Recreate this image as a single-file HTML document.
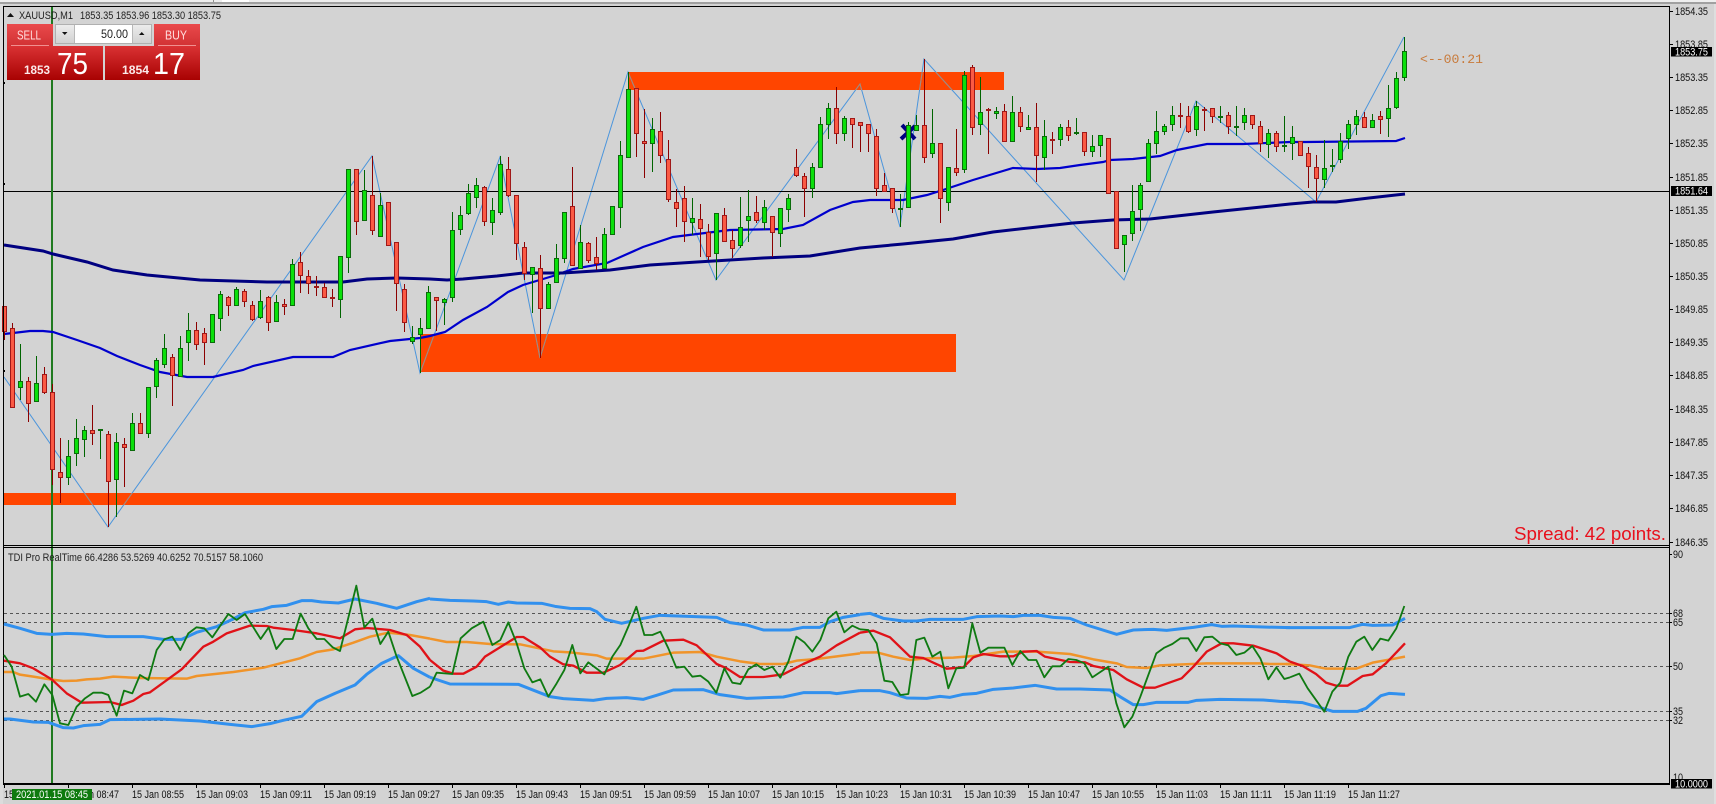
<!DOCTYPE html>
<html><head><meta charset="utf-8"><title>XAUUSD,M1</title>
<style>
html,body{margin:0;padding:0;background:#d3d3d3;width:1716px;height:804px;overflow:hidden}
svg{display:block}
text{font-family:"Liberation Sans",Arial,sans-serif}
</style></head><body>
<svg xmlns="http://www.w3.org/2000/svg" width="1716" height="804" viewBox="0 0 1716 804">
<defs>
<linearGradient id="g1" x1="0" y1="0" x2="0" y2="1"><stop offset="0" stop-color="#ea4a4c"/><stop offset="1" stop-color="#d03032"/></linearGradient>
<linearGradient id="g2" x1="0" y1="0" x2="0" y2="1"><stop offset="0" stop-color="#da3234"/><stop offset="1" stop-color="#a80202"/></linearGradient>
<linearGradient id="g3" x1="0" y1="0" x2="0" y2="1"><stop offset="0" stop-color="#ececec"/><stop offset="1" stop-color="#d2d2d2"/></linearGradient>
<clipPath id="orangeclip"><rect x="628" y="72" width="376" height="18"/><rect x="421" y="334" width="535" height="38"/><rect x="4" y="493" width="952" height="12"/></clipPath>
</defs>
<rect width="1716" height="804" fill="#d3d3d3"/>
<!-- window edges -->
<rect x="0" y="0" width="1716" height="2" fill="#eeeeee"/>
<rect x="213" y="0" width="1" height="2" fill="#909090"/>
<rect x="222" y="0" width="27" height="2" fill="#ffffff"/>
<rect x="0" y="2" width="1716" height="2" fill="#a0a0a0"/>
<rect x="0" y="4" width="3" height="800" fill="#dcdcdc"/>
<rect x="1714" y="4" width="2" height="800" fill="#dedede"/>
<!-- orange rectangles -->
<rect x="628" y="72" width="376" height="18" fill="#ff4500"/>
<rect x="421" y="334" width="535" height="38" fill="#ff4500"/>
<rect x="4" y="493" width="952" height="12" fill="#ff4500"/>
<!-- zigzag -->
<polyline fill="none" stroke="#4b95dc" stroke-width="1" points="4,377 108,527 372,156 420,373 500,157 540,358 628,72 716,280 860,84 900,227 924,59 1124,280 1196,101 1316,202 1404,37"/>
<polyline clip-path="url(#orangeclip)" fill="none" stroke="#a88a78" stroke-width="1" points="4,377 108,527 372,156 420,373 500,157 540,358 628,72 716,280 860,84 900,227 924,59 1124,280 1196,101 1316,202 1404,37"/>
<!-- horizontal price line -->
<rect x="3" y="191" width="1666" height="1" fill="#000"/>
<!-- vertical green line -->
<rect x="51" y="7" width="2" height="777" fill="#1f7a1f"/>
<!-- moving averages -->
<polyline fill="none" stroke="#0000cd" stroke-width="2.2" points="4,334 13,333 30,331 43,331 53,332 77,340 100,348 117,356 140,365 160,372 187,377 213,377 243,370 253,366 293,357 333,357 350,350 390,341 420,338 430,336 445,332 463,320 487,307 508,292 523,285 553,276 573,269 607,263 643,247 673,237 697,234 730,230 783,229 803,225 830,210 853,202 870,200 903,200 927,195 943,190 973,180 1013,168 1037,169 1060,168 1080,165 1103,162 1110,160 1133,159 1160,156 1177,150 1207,144 1243,144 1290,142 1306,142 1396,141 1405,138"/>
<polyline fill="none" stroke="#000080" stroke-width="3" points="4,245 43,251 53,254 87,262 113,270 147,275 200,280 267,282 343,282 367,279 397,278 430,279 447,280 463,279 497,276 523,273 563,273 610,270 650,265 697,262 763,258 810,256 860,248 903,244 953,239 993,232 1073,223 1113,220 1150,219 1213,212 1290,204 1313,202 1336,202 1369,198 1405,194"/>
<!-- x marker -->
<path d="M902 125L915 139M915 126L901 139" stroke="#000080" stroke-width="4" fill="none"/>
<!-- candles -->
<g shape-rendering="crispEdges">
<path fill="none" stroke="#006400" stroke-width="1" d="M20.5 344V400M36.5 356V401M68.5 440V485M76.5 419V466M84.5 426V457M100.5 429V459M116.5 433V517M132.5 413V451M148.5 387V438M156.5 358V398M164.5 334V368M180.5 336V376M188.5 313V361M212.5 314V342M220.5 291V331M236.5 287V305M260.5 290V319M276.5 295V321M292.5 259V305M340.5 256V318M348.5 169V273M364.5 170V220M380.5 193V236M412.5 326V344M420.5 318V373M428.5 286V328M444.5 298V325M452.5 212V302M460.5 206V235M468.5 184V215M476.5 178V208M492.5 198V235M500.5 156V215M532.5 267V313M548.5 282V308M556.5 244V282M564.5 212V263M580.5 225V268M604.5 228V268M612.5 206V234M620.5 141V228M628.5 72V157M652.5 118V172M692.5 198V235M716.5 213V280M740.5 197V248M748.5 190V242M764.5 200V230M780.5 208V247M788.5 194V222M812.5 163V198M820.5 117V167M828.5 103V139M844.5 116V141M900.5 194V227M908.5 122V208M916.5 115V130M932.5 109V158M948.5 167V211M964.5 71V173M980.5 77V135M996.5 107V119M1012.5 96V141M1028.5 115V129M1044.5 120V170M1060.5 124V146M1076.5 118V135M1092.5 135V157M1100.5 135V157M1124.5 235V272M1132.5 185V241M1140.5 183V231M1148.5 139V181M1156.5 111V154M1164.5 124V135M1172.5 106V131M1196.5 101V136M1220.5 106V123M1236.5 106V136M1244.5 108V130M1268.5 129V158M1284.5 116V152M1292.5 126V160M1324.5 140V188M1332.5 149V172M1340.5 133V163M1348.5 120V149M1356.5 110V135M1372.5 114V127M1388.5 85V137M1396.5 72V109M1404.5 37V81"/>
<path fill="none" stroke="#8b0000" stroke-width="1" d="M4.5 306V340M12.5 323V407M28.5 377V422M44.5 367V394M52.5 384V485M60.5 438V503M92.5 405V445M108.5 431V527M124.5 438V487M140.5 413V433M172.5 354V406M196.5 322V350M204.5 328V365M228.5 296V316M244.5 289V307M252.5 301V321M268.5 296V331M284.5 299V315M300.5 252V293M308.5 270V294M316.5 276V296M324.5 283V297M332.5 289V307M356.5 169V235M372.5 156V235M388.5 202V245M396.5 242V311M404.5 284V332M436.5 297V331M484.5 186V226M508.5 157V197M516.5 195V260M524.5 242V280M540.5 255V358M572.5 167V265M588.5 242V263M596.5 237V270M636.5 88V157M644.5 109V178M660.5 112V163M668.5 140V202M676.5 189V227M684.5 186V242M700.5 204V257M708.5 224V260M724.5 208V241M732.5 230V258M756.5 196V223M772.5 216V257M796.5 149V177M804.5 173V217M836.5 87V144M852.5 118V148M860.5 122V152M868.5 124V152M876.5 129V196M884.5 173V191M892.5 188V213M924.5 59V163M940.5 143V223M956.5 129V176M972.5 65V135M988.5 108V154M1004.5 104V141M1020.5 107V132M1036.5 103V182M1052.5 132V154M1068.5 120V141M1084.5 132V156M1108.5 138V193M1116.5 191V249M1180.5 103V128M1188.5 106V133M1204.5 107V131M1212.5 108V123M1228.5 112V134M1252.5 115V129M1260.5 121V152M1276.5 131V152M1300.5 141V155M1308.5 147V188M1316.5 155V202M1364.5 112V127M1380.5 111V134"/>
<path fill="#0be00b" stroke="#0b6b0b" stroke-width="1" d="M18.5 381.5h4v6h-4zM34.5 383.5h4v18h-4zM66.5 456.5h4v21h-4zM74.5 438.5h4v15h-4zM82.5 430.5h4v9h-4zM98.5 429.5h4v1h-4zM114.5 442.5h4v37h-4zM130.5 423.5h4v27h-4zM146.5 387.5h4v46h-4zM154.5 360.5h4v26h-4zM162.5 348.5h4v16h-4zM178.5 348.5h4v28h-4zM186.5 330.5h4v12h-4zM210.5 314.5h4v28h-4zM218.5 294.5h4v24h-4zM234.5 289.5h4v16h-4zM258.5 301.5h4v16h-4zM274.5 302.5h4v19h-4zM290.5 264.5h4v41h-4zM338.5 256.5h4v43h-4zM346.5 169.5h4v88h-4zM362.5 190.5h4v30h-4zM378.5 205.5h4v31h-4zM410.5 337.5h4v4h-4zM418.5 328.5h4v6h-4zM426.5 292.5h4v36h-4zM442.5 299.5h4v3h-4zM450.5 230.5h4v67h-4zM458.5 215.5h4v14h-4zM466.5 193.5h4v20h-4zM474.5 185.5h4v12h-4zM490.5 210.5h4v12h-4zM498.5 164.5h4v48h-4zM530.5 267.5h4v7h-4zM546.5 284.5h4v24h-4zM554.5 258.5h4v24h-4zM562.5 212.5h4v46h-4zM578.5 242.5h4v26h-4zM602.5 234.5h4v34h-4zM610.5 206.5h4v28h-4zM618.5 155.5h4v52h-4zM626.5 89.5h4v68h-4zM650.5 129.5h4v14h-4zM690.5 218.5h4v4h-4zM714.5 213.5h4v40h-4zM738.5 227.5h4v18h-4zM746.5 216.5h4v4h-4zM762.5 207.5h4v15h-4zM778.5 208.5h4v25h-4zM786.5 198.5h4v11h-4zM810.5 167.5h4v21h-4zM818.5 124.5h4v43h-4zM826.5 108.5h4v16h-4zM842.5 118.5h4v15h-4zM898.5 208.5h4v1h-4zM906.5 125.5h4v82h-4zM914.5 125.5h4v5h-4zM930.5 143.5h4v10h-4zM946.5 167.5h4v35h-4zM962.5 75.5h4v94h-4zM978.5 112.5h4v12h-4zM994.5 111.5h4v2h-4zM1010.5 112.5h4v29h-4zM1026.5 127.5h4v2h-4zM1042.5 136.5h4v21h-4zM1058.5 127.5h4v12h-4zM1074.5 132.5h4v1h-4zM1090.5 146.5h4v5h-4zM1098.5 135.5h4v10h-4zM1122.5 235.5h4v9h-4zM1130.5 211.5h4v22h-4zM1138.5 185.5h4v24h-4zM1146.5 143.5h4v38h-4zM1154.5 131.5h4v12h-4zM1162.5 126.5h4v5h-4zM1170.5 115.5h4v9h-4zM1194.5 106.5h4v23h-4zM1218.5 116.5h4v1h-4zM1234.5 126.5h4v1h-4zM1242.5 115.5h4v7h-4zM1266.5 133.5h4v11h-4zM1282.5 145.5h4v1h-4zM1290.5 137.5h4v6h-4zM1322.5 168.5h4v11h-4zM1330.5 165.5h4v1h-4zM1338.5 141.5h4v18h-4zM1346.5 124.5h4v14h-4zM1354.5 116.5h4v8h-4zM1370.5 120.5h4v7h-4zM1386.5 108.5h4v10h-4zM1394.5 78.5h4v29h-4zM1402.5 51.5h4v26h-4z"/>
<path fill="#fb5a44" stroke="#a01818" stroke-width="1" d="M2.5 306.5h4v25h-4zM10.5 328.5h4v79h-4zM26.5 381.5h4v22h-4zM42.5 374.5h4v18h-4zM50.5 392.5h4v77h-4zM58.5 472.5h4v5h-4zM90.5 430.5h4v3h-4zM106.5 434.5h4v47h-4zM122.5 444.5h4v3h-4zM138.5 423.5h4v10h-4zM170.5 357.5h4v18h-4zM194.5 330.5h4v14h-4zM202.5 333.5h4v9h-4zM226.5 297.5h4v8h-4zM242.5 291.5h4v10h-4zM250.5 305.5h4v14h-4zM266.5 297.5h4v25h-4zM282.5 304.5h4v2h-4zM298.5 262.5h4v13h-4zM306.5 276.5h4v7h-4zM314.5 286.5h4v1h-4zM322.5 287.5h4v10h-4zM330.5 297.5h4v1h-4zM354.5 169.5h4v52h-4zM370.5 195.5h4v35h-4zM386.5 202.5h4v43h-4zM394.5 242.5h4v41h-4zM402.5 289.5h4v33h-4zM434.5 297.5h4v3h-4zM482.5 187.5h4v34h-4zM506.5 169.5h4v26h-4zM514.5 195.5h4v48h-4zM522.5 247.5h4v26h-4zM538.5 268.5h4v40h-4zM570.5 206.5h4v59h-4zM586.5 243.5h4v17h-4zM594.5 257.5h4v6h-4zM634.5 88.5h4v45h-4zM642.5 141.5h4v2h-4zM658.5 131.5h4v24h-4zM666.5 159.5h4v40h-4zM674.5 202.5h4v6h-4zM682.5 198.5h4v23h-4zM698.5 219.5h4v9h-4zM706.5 232.5h4v24h-4zM722.5 215.5h4v26h-4zM730.5 240.5h4v8h-4zM754.5 212.5h4v8h-4zM770.5 216.5h4v16h-4zM794.5 167.5h4v8h-4zM802.5 176.5h4v12h-4zM834.5 108.5h4v25h-4zM850.5 118.5h4v6h-4zM858.5 122.5h4v3h-4zM866.5 124.5h4v9h-4zM874.5 136.5h4v52h-4zM882.5 185.5h4v6h-4zM890.5 188.5h4v20h-4zM922.5 125.5h4v32h-4zM938.5 143.5h4v55h-4zM954.5 168.5h4v4h-4zM970.5 67.5h4v60h-4zM986.5 109.5h4v1h-4zM1002.5 111.5h4v30h-4zM1018.5 112.5h4v14h-4zM1034.5 127.5h4v28h-4zM1050.5 139.5h4v1h-4zM1066.5 127.5h4v8h-4zM1082.5 132.5h4v19h-4zM1106.5 138.5h4v55h-4zM1114.5 191.5h4v57h-4zM1178.5 115.5h4v1h-4zM1186.5 116.5h4v15h-4zM1202.5 109.5h4v1h-4zM1210.5 108.5h4v8h-4zM1226.5 115.5h4v11h-4zM1250.5 115.5h4v9h-4zM1258.5 126.5h4v17h-4zM1274.5 133.5h4v13h-4zM1298.5 141.5h4v14h-4zM1306.5 153.5h4v13h-4zM1314.5 167.5h4v11h-4zM1362.5 117.5h4v10h-4zM1378.5 116.5h4v3h-4z"/>
</g>
<!-- left dots -->
<rect x="4" y="82" width="1" height="2" fill="#000"/><rect x="4" y="183" width="1" height="2" fill="#000"/><rect x="4" y="370" width="1" height="2" fill="#000"/>
<!-- frames -->
<rect x="3" y="6" width="1667" height="1" fill="#000"/>
<rect x="3" y="6" width="1" height="779" fill="#000"/>
<rect x="1669" y="6" width="1" height="779" fill="#000"/>
<rect x="3" y="545" width="1667" height="1" fill="#000"/>
<rect x="3" y="547" width="1667" height="1" fill="#000"/>
<rect x="3" y="783" width="1667" height="2" fill="#000"/>
<!-- indicator levels -->
<g stroke="#555" stroke-width="1" stroke-dasharray="3 3" fill="none" shape-rendering="crispEdges">
<path d="M4 613.5H1669M4 622.5H1669M4 666.5H1669M4 711.5H1669M4 720.5H1669"/>
</g>
<!-- bands -->
<g fill="none" stroke="#3190ee" stroke-width="9" stroke-linejoin="round">
<polyline transform="translate(0 540) scale(.33333)" points="12,252 60,265 110,280 155,283 200,280 250,282 320,290 430,290 490,298 545,298 590,277 650,260 700,237 735,218 790,208 815,200 860,196 905,182 935,182 965,186 1015,189 1065,177 1130,190 1190,205 1250,185 1290,175"/>
<polyline transform="translate(430 540) scale(.33333)" points="0,177 60,181 130,183 170,185 205,193 235,186 260,189 335,190 375,199 420,205 480,206 500,215 525,238 575,250 640,235 690,226 860,232 900,248 950,255 1000,270 1080,270 1120,262 1170,262 1200,245 1240,232 1290,224"/>
<polyline transform="translate(860 540) scale(.33333)" points="0,223 30,220 70,235 130,243 170,243 210,238 310,238 350,230 420,228 460,230 490,226 540,226 580,232 630,235 680,255 770,283 820,270 880,268 920,271 1000,262 1055,254 1085,259 1120,258 1210,261 1290,263"/>
<polyline transform="translate(1286 540) scale(.33333)" points="0,263 190,263 230,253 260,256 320,255 357,235"/>
<polyline transform="translate(0 540) scale(.33333)" points="12,537 30,537 100,546 145,547 190,563 220,564 250,557 300,553 330,539 480,537 600,543 690,553 755,560 810,551 850,541 905,529 950,485 1005,460 1065,435 1100,403 1145,370 1195,347 1240,385 1290,412"/>
<polyline transform="translate(430 540) scale(.33333)" points="0,412 60,432 265,433 360,470 400,476 490,481 530,475 590,473 640,478 680,466 730,450 820,449 870,464 950,475 1060,471 1120,458 1200,458 1220,461 1290,452"/>
<polyline transform="translate(860 540) scale(.33333)" points="0,452 60,452 90,458 140,474 200,475 240,469 270,472 310,463 350,460 400,448 460,444 525,436 590,447 660,447 750,450 780,470 820,494 850,494 890,487 985,487 1010,481 1080,478 1210,480 1260,484 1290,485"/>
<polyline transform="translate(1286 540) scale(.33333)" points="0,485 50,488 110,505 140,514 215,514 240,505 285,467 310,460 357,463"/>
</g>
<!-- orange line -->
<g fill="none" stroke="#f0942a" stroke-width="7.5" stroke-linejoin="round">
<polyline transform="translate(0 540) scale(.33333)" points="12,396 40,396 60,404 100,410 150,418 190,423 230,422 260,418 300,416 340,410 420,414 560,416 590,408 700,396 790,383 900,355 950,336 1000,328 1060,308 1110,290 1165,278 1230,285 1290,296"/>
<polyline transform="translate(430 540) scale(.33333)" points="0,296 50,306 110,306 180,312 270,313 370,334 420,337 500,346 530,356 640,356 730,338 810,336 860,350 930,364 990,372 1060,372 1100,362 1160,357 1290,340"/>
<polyline transform="translate(860 540) scale(.33333)" points="0,338 50,337 100,350 150,360 200,355 280,353 340,348 430,335 530,335 630,342 700,358 770,370 800,381 860,384 900,376 1040,370 1200,370 1230,372 1290,372"/>
<polyline transform="translate(1286 540) scale(.33333)" points="0,372 70,376 120,386 210,386 260,368 357,350"/>
</g>
<!-- red line -->
<g fill="none" stroke="#e01218" stroke-width="7" stroke-linejoin="round">
<polyline transform="translate(0 540) scale(.33333)" points="12,362 60,370 100,385 155,418 200,460 245,488 330,486 365,495 400,482 430,462 450,457 545,388 610,320 640,305 680,280 750,257 800,258 820,263 880,270 950,280 1020,295 1065,268 1100,264 1170,270 1220,285 1260,320 1290,360"/>
<polyline transform="translate(430 540) scale(.33333)" points="0,360 40,392 70,401 100,401 140,380 165,350 260,291 280,291 330,322 360,350 400,373 430,377 470,398 520,398 570,375 620,333 640,332 700,302 760,299 800,316 860,372 890,385 930,411 1000,411 1060,403 1120,372 1170,350 1220,316 1290,278"/>
<polyline transform="translate(860 540) scale(.33333)" points="0,278 40,272 90,292 150,350 190,354 220,368 260,386 310,382 340,352 370,342 420,349 460,349 490,335 530,333 555,350 630,366 675,367 700,378 760,390 800,418 850,443 885,443 965,415 1000,380 1040,335 1085,310 1120,310 1180,317 1250,340 1290,365"/>
<polyline transform="translate(1286 540) scale(.33333)" points="12,365 50,378 90,402 120,428 150,437 185,437 230,408 260,403 300,370 357,310"/>
</g>
<!-- green RSI -->
<g fill="none" stroke="#0f7a12" stroke-width="5.5" stroke-linejoin="round">
<polyline transform="translate(0 540) scale(.33333)" points="12,345 35,380 60,470 85,462 108,485 133,433 157,465 180,550 205,555 230,500 255,475 280,458 305,458 325,465 350,527 372,452 397,460 420,405 445,420 470,330 493,298 517,290 541,330 565,280 589,262 613,265 637,292 685,222 710,240 735,222 782,297 806,262 829,327 853,297 878,297 902,221 925,265 950,297 973,297 998,322 1020,333 1069,137 1093,262 1117,236 1141,312 1165,275 1189,347 1237,468 1262,458 1290,440"/>
<polyline transform="translate(430 540) scale(.33333)" points="0,440 20,398 67,402 92,295 125,265 160,245 187,315 211,300 235,247 260,310 283,385 307,427 331,418 355,470 380,430 403,390 427,315 451,400 475,367 499,385 523,403 547,350 571,315 595,260 619,200 643,285 667,285 691,275 715,325 739,383 763,380 787,410 811,407 835,425 859,458 883,385 907,428 931,432 955,388 979,373 1003,390 1027,380 1051,413 1075,365 1099,290 1123,307 1147,335 1171,300 1195,235 1219,215 1243,277 1267,257 1290,268"/>
<polyline transform="translate(860 540) scale(.33333)" points="0,268 25,270 50,310 73,422 97,426 121,465 145,462 169,300 193,293 217,350 241,335 265,445 289,385 313,383 337,250 361,338 385,323 433,323 457,375 481,333 505,360 529,360 553,412 577,379 601,379 625,357 649,360 673,370 697,412 745,380 769,490 793,562 817,530 841,470 889,340 913,323 937,312 961,295 985,295 1009,333 1033,292 1057,290 1081,310 1105,316 1129,345 1153,338 1177,318 1201,355 1225,418 1249,382 1273,417 1290,412"/>
<polyline transform="translate(1286 540) scale(.33333)" points="12,412 40,401 65,445 115,515 139,455 163,428 187,350 211,305 235,290 259,330 283,296 307,302 331,265 355,198"/>
</g>
<!-- price axis ticks -->
<path stroke="#000" stroke-width="1" fill="none" shape-rendering="crispEdges" d="M1669 11.5h4M1669 44.5h4M1669 77.5h4M1669 110.5h4M1669 143.5h4M1669 177.5h4M1669 210.5h4M1669 243.5h4M1669 276.5h4M1669 309.5h4M1669 342.5h4M1669 375.5h4M1669 409.5h4M1669 442.5h4M1669 475.5h4M1669 508.5h4M1669 542.5h4M1669 554.5h3M1669 613.5h3M1669 622.5h3M1669 666.5h3M1669 711.5h3M1669 720.5h3"/>
<!-- price labels -->
<g font-size="11" fill="#111">
<text x="1675" y="15" textLength="33" lengthAdjust="spacingAndGlyphs">1854.35</text>
<text x="1675" y="48" textLength="33" lengthAdjust="spacingAndGlyphs">1853.85</text>
<text x="1675" y="81" textLength="33" lengthAdjust="spacingAndGlyphs">1853.35</text>
<text x="1675" y="114" textLength="33" lengthAdjust="spacingAndGlyphs">1852.85</text>
<text x="1675" y="147" textLength="33" lengthAdjust="spacingAndGlyphs">1852.35</text>
<text x="1675" y="181" textLength="33" lengthAdjust="spacingAndGlyphs">1851.85</text>
<text x="1675" y="214" textLength="33" lengthAdjust="spacingAndGlyphs">1851.35</text>
<text x="1675" y="247" textLength="33" lengthAdjust="spacingAndGlyphs">1850.85</text>
<text x="1675" y="280" textLength="33" lengthAdjust="spacingAndGlyphs">1850.35</text>
<text x="1675" y="313" textLength="33" lengthAdjust="spacingAndGlyphs">1849.85</text>
<text x="1675" y="346" textLength="33" lengthAdjust="spacingAndGlyphs">1849.35</text>
<text x="1675" y="379" textLength="33" lengthAdjust="spacingAndGlyphs">1848.85</text>
<text x="1675" y="413" textLength="33" lengthAdjust="spacingAndGlyphs">1848.35</text>
<text x="1675" y="446" textLength="33" lengthAdjust="spacingAndGlyphs">1847.85</text>
<text x="1675" y="479" textLength="33" lengthAdjust="spacingAndGlyphs">1847.35</text>
<text x="1675" y="512" textLength="33" lengthAdjust="spacingAndGlyphs">1846.85</text>
<text x="1675" y="546" textLength="33" lengthAdjust="spacingAndGlyphs">1846.35</text>
<text x="1673" y="558" textLength="10" lengthAdjust="spacingAndGlyphs">90</text>
<text x="1673" y="617" textLength="10" lengthAdjust="spacingAndGlyphs">68</text>
<text x="1673" y="626" textLength="10" lengthAdjust="spacingAndGlyphs">65</text>
<text x="1673" y="670" textLength="10" lengthAdjust="spacingAndGlyphs">50</text>
<text x="1673" y="715" textLength="10" lengthAdjust="spacingAndGlyphs">35</text>
<text x="1673" y="724" textLength="10" lengthAdjust="spacingAndGlyphs">32</text>
<text x="1673" y="781" textLength="10" lengthAdjust="spacingAndGlyphs">10</text>
</g>
<rect x="1671" y="47" width="41" height="9.5" fill="#000"/>
<text x="1675" y="55.5" font-size="11" fill="#fff" textLength="33" lengthAdjust="spacingAndGlyphs">1853.75</text>
<rect x="1671" y="186" width="41" height="10" fill="#000"/>
<text x="1675" y="194.5" font-size="11" fill="#fff" textLength="33" lengthAdjust="spacingAndGlyphs">1851.64</text>
<rect x="1671" y="779" width="41" height="9.5" fill="#000"/>
<text x="1675" y="787.5" font-size="11" fill="#fff" textLength="33" lengthAdjust="spacingAndGlyphs">10.0000</text>
<!-- time ticks -->
<path stroke="#000" stroke-width="1" fill="none" shape-rendering="crispEdges" d="M4.5 785v3M68.5 785v3M132.5 785v3M196.5 785v3M260.5 785v3M324.5 785v3M388.5 785v3M452.5 785v3M516.5 785v3M580.5 785v3M644.5 785v3M708.5 785v3M772.5 785v3M836.5 785v3M900.5 785v3M964.5 785v3M1028.5 785v3M1092.5 785v3M1156.5 785v3M1220.5 785v3M1284.5 785v3M1348.5 785v3"/>
<g font-size="11" fill="#111">
<text x="4" y="798" textLength="52" lengthAdjust="spacingAndGlyphs">15 Jan 08:39</text>
<text x="67" y="798" textLength="52" lengthAdjust="spacingAndGlyphs">15 Jan 08:47</text>
<text x="132" y="798" textLength="52" lengthAdjust="spacingAndGlyphs">15 Jan 08:55</text>
<text x="196" y="798" textLength="52" lengthAdjust="spacingAndGlyphs">15 Jan 09:03</text>
<text x="260" y="798" textLength="52" lengthAdjust="spacingAndGlyphs">15 Jan 09:11</text>
<text x="324" y="798" textLength="52" lengthAdjust="spacingAndGlyphs">15 Jan 09:19</text>
<text x="388" y="798" textLength="52" lengthAdjust="spacingAndGlyphs">15 Jan 09:27</text>
<text x="452" y="798" textLength="52" lengthAdjust="spacingAndGlyphs">15 Jan 09:35</text>
<text x="516" y="798" textLength="52" lengthAdjust="spacingAndGlyphs">15 Jan 09:43</text>
<text x="580" y="798" textLength="52" lengthAdjust="spacingAndGlyphs">15 Jan 09:51</text>
<text x="644" y="798" textLength="52" lengthAdjust="spacingAndGlyphs">15 Jan 09:59</text>
<text x="708" y="798" textLength="52" lengthAdjust="spacingAndGlyphs">15 Jan 10:07</text>
<text x="772" y="798" textLength="52" lengthAdjust="spacingAndGlyphs">15 Jan 10:15</text>
<text x="836" y="798" textLength="52" lengthAdjust="spacingAndGlyphs">15 Jan 10:23</text>
<text x="900" y="798" textLength="52" lengthAdjust="spacingAndGlyphs">15 Jan 10:31</text>
<text x="964" y="798" textLength="52" lengthAdjust="spacingAndGlyphs">15 Jan 10:39</text>
<text x="1028" y="798" textLength="52" lengthAdjust="spacingAndGlyphs">15 Jan 10:47</text>
<text x="1092" y="798" textLength="52" lengthAdjust="spacingAndGlyphs">15 Jan 10:55</text>
<text x="1156" y="798" textLength="52" lengthAdjust="spacingAndGlyphs">15 Jan 11:03</text>
<text x="1220" y="798" textLength="52" lengthAdjust="spacingAndGlyphs">15 Jan 11:11</text>
<text x="1284" y="798" textLength="52" lengthAdjust="spacingAndGlyphs">15 Jan 11:19</text>
<text x="1348" y="798" textLength="52" lengthAdjust="spacingAndGlyphs">15 Jan 11:27</text>
</g>
<rect x="12" y="789" width="80" height="11" fill="#0e7a0e"/>
<text x="16" y="798" font-size="11" fill="#fff" textLength="72" lengthAdjust="spacingAndGlyphs">2021.01.15 08:45</text>
<!-- chart texts -->
<path d="M7 17L10.5 13L14 17Z" fill="#111"/>
<text x="19" y="19" font-size="11" fill="#222" textLength="54" lengthAdjust="spacingAndGlyphs">XAUUSD,M1</text>
<text x="80" y="19" font-size="11" fill="#222" textLength="141" lengthAdjust="spacingAndGlyphs">1853.35 1853.96 1853.30 1853.75</text>
<text x="8" y="561" font-size="11" fill="#222" textLength="255" lengthAdjust="spacingAndGlyphs">TDI Pro RealTime 66.4286 53.5269 40.6252 70.5157 58.1060</text>
<text x="1420" y="63" font-size="13" fill="#c87a3a" style="font-family:'Liberation Mono',monospace" textLength="63" lengthAdjust="spacingAndGlyphs">&lt;--00:21</text>
<text x="1514" y="540" font-size="18.5" fill="#e8101c" textLength="152" lengthAdjust="spacingAndGlyphs">Spread: 42 points.</text>
<!-- trade panel -->
<rect x="7" y="24" width="46" height="23" fill="url(#g1)"/>
<rect x="154" y="24" width="46" height="23" fill="url(#g1)"/>
<rect x="7" y="46" width="96" height="34" fill="url(#g2)"/>
<rect x="105" y="46" width="95" height="34" fill="url(#g2)"/>
<rect x="53" y="24" width="101" height="22" fill="#d3d3d3"/>
<rect x="11" y="45" width="38" height="1" fill="#f09090"/>
<rect x="158" y="45" width="38" height="1" fill="#f09090"/>
<rect x="55.5" y="24.5" width="96" height="19" fill="#fff" stroke="#b0b0b0"/>
<rect x="56" y="25" width="18" height="18" fill="url(#g3)"/>
<rect x="133" y="25" width="18" height="18" fill="url(#g3)"/>
<rect x="74" y="25" width="1" height="18" fill="#b8b8b8"/>
<rect x="132" y="25" width="1" height="18" fill="#b8b8b8"/>
<path d="M62 32H67.500L64.750 35Z" fill="#111"/>
<path d="M139 35H144.500L141.750 32Z" fill="#111"/>
<text x="101" y="38" font-size="12" fill="#222" textLength="27" lengthAdjust="spacingAndGlyphs">50.00</text>
<text x="17" y="39.500" font-size="12.500" fill="#ffdcdc" textLength="24" lengthAdjust="spacingAndGlyphs">SELL</text>
<text x="165" y="39.500" font-size="12.500" fill="#ffdcdc" textLength="22" lengthAdjust="spacingAndGlyphs">BUY</text>
<text x="24" y="74" font-size="12" font-weight="bold" fill="#fbeaea" textLength="26" lengthAdjust="spacingAndGlyphs">1853</text>
<text x="57" y="74" font-size="30.500" fill="#fff" textLength="31" lengthAdjust="spacingAndGlyphs">75</text>
<text x="122" y="74" font-size="12" font-weight="bold" fill="#fbeaea" textLength="27" lengthAdjust="spacingAndGlyphs">1854</text>
<text x="153" y="74" font-size="30.500" fill="#fff" textLength="32" lengthAdjust="spacingAndGlyphs">17</text>
</svg>
</body></html>
